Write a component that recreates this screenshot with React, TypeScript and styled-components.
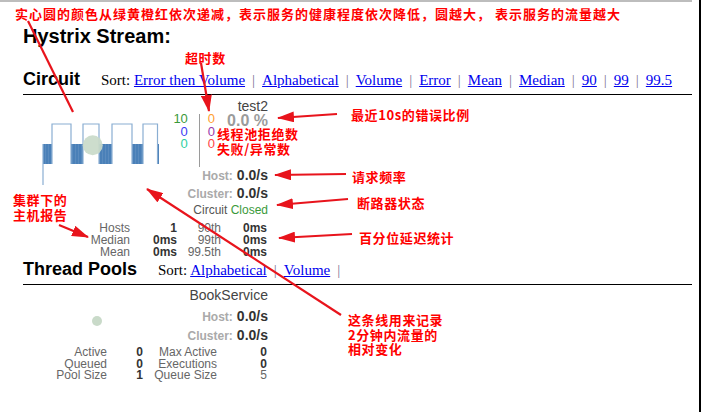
import React from "react";
import styled, { createGlobalStyle } from "styled-components";

const GlobalStyle = createGlobalStyle`
  html, body { margin: 0; padding: 0; background: #fff; }
  body { font-family: "Liberation Sans", Arial, sans-serif; }
`;

const Page = styled.div`
  position: relative;
  width: 699px;
  height: 412px;
  border-right: 2px solid #000;
  overflow: hidden;
  display: flex;
  flex-direction: column;
  font-family: "Liberation Sans", Arial, sans-serif;
  color: #000;
`;

const TopRule = styled.div`
  flex: none;
  width: 692px;
  height: 2px;
  background: #bdbdbd;
`;

const Content = styled.main`
  padding-left: 23px;
  width: 669px;
`;

const Title = styled.h1`
  margin: 22px 0 0;
  font-size: 20px;
  line-height: 24px;
  font-weight: bold;
`;

const SectionHeader = styled.div<{ $top: number }>`
  display: flex;
  align-items: baseline;
  margin-top: ${(p) => p.$top}px;
  padding-bottom: 3px;
  border-bottom: 1px solid #000;
`;

const SectionTitle = styled.h2`
  margin: 0;
  font-size: 18px;
  line-height: 22px;
  font-weight: bold;
`;

const SortBar = styled.div`
  margin-left: 21px;
  font-family: "Liberation Serif", "Times New Roman", serif;
  font-size: 15px;
  line-height: 22px;
  white-space: nowrap;
`;

const SortLink = styled.a`
  color: #0000ee;
  text-decoration: underline;
  cursor: pointer;
`;

const Sep = styled.span`
  color: #7d7196;
  padding: 0 7px;
`;

const Card = styled.section<{ $pad: number }>`
  width: 245px;
  padding-top: ${(p) => p.$pad}px;
  display: flex;
  flex-direction: column;
`;

const CardTop = styled.div`
  display: flex;
`;

const ChartArea = styled.div`
  flex: none;
  width: 142px;
`;

const ChartSvg = styled.svg<{ $mt: number; $ml: number }>`
  display: block;
  margin-top: ${(p) => p.$mt}px;
  margin-left: ${(p) => p.$ml}px;
  overflow: visible;
`;

const RightCol = styled.div`
  flex: 1;
  display: flex;
  flex-direction: column;
  align-items: flex-end;
`;

const Name = styled.div`
  font-size: 14px;
  line-height: 14px;
  color: #444;
`;

const CountsRow = styled.div`
  display: flex;
  align-items: flex-start;
`;

const CountCol = styled.div<{ $align: string }>`
  display: flex;
  flex-direction: column;
  font-size: 13px;
  line-height: 12.5px;
  text-align: ${(p) => p.$align};
`;

const Count = styled.span<{ $color: string }>`
  color: ${(p) => p.$color};
`;

const Divider = styled.div`
  width: 1px;
  height: 53px;
  margin: 1px 8px 0 11px;
  background: #9a9a9a;
`;

const Percent = styled.div`
  margin-left: 12px;
  font-size: 16px;
  line-height: 16px;
  font-weight: bold;
  color: #9b9b9b;
`;

const RateBlock = styled.div<{ $mt: number; $lh: number }>`
  margin-top: ${(p) => p.$mt}px;
  align-self: stretch;
  text-align: right;
  font-size: 14px;
  font-weight: bold;
  line-height: ${(p) => p.$lh}px;
  color: #333;
`;

const RateRow = styled.div`
  white-space: nowrap;
`;

const RateLabel = styled.span`
  margin-right: 4px;
  font-size: 12px;
  color: #aaa;
`;

const Status = styled.div`
  align-self: flex-end;
  font-size: 12px;
  line-height: 14px;
  color: #555;
`;

const Closed = styled.span`
  color: #3a9a3a;
`;

const StatTable = styled.div<{ $cols: string; $mt: number; $lh: number }>`
  display: grid;
  grid-template-columns: ${(p) => p.$cols};
  margin-top: ${(p) => p.$mt}px;
  font-size: 12px;
  line-height: ${(p) => p.$lh}px;
  text-align: right;
`;

const Cell = styled.span<{ $value?: boolean }>`
  color: ${(p) => (p.$value ? "#333" : "#666")};
  font-weight: ${(p) => (p.$value ? "bold" : "normal")};
  white-space: nowrap;
`;

const Overlay = styled.svg`
  position: absolute;
  left: 0;
  top: 0;
  pointer-events: none;
`;

const Note = styled.div<{ $x: number; $y: number; $lh?: number; $ls?: number }>`
  position: absolute;
  left: ${(p) => p.$x}px;
  top: ${(p) => p.$y}px;
  font-family: "Noto Sans CJK SC", "Liberation Sans", sans-serif;
  font-weight: bold;
  font-size: 13px;
  line-height: ${(p) => p.$lh ?? 13}px;
  letter-spacing: ${(p) => p.$ls ?? 0.6}px;
  color: #ff0000;
  white-space: pre;
  pointer-events: none;
`;

const blocks: [number, number][] = [
  [1, 9],
  [29, 12],
  [57, 13],
  [90, 11],
  [115, 2],
];

const CircuitChart = () => (
  <ChartSvg $mt={25} $ml={19} width="117" height="61" viewBox="0 0 117 61">
    <defs>
      <pattern id="stripes" width="3" height="20" patternUnits="userSpaceOnUse">
        <rect width="3" height="20" fill="#4a80b8" />
        <rect width="0.6" height="20" fill="#6592c2" />
      </pattern>
    </defs>
    {blocks.map(([x, w]) => (
      <rect key={x} x={x} y={20} width={w} height={20} fill="url(#stripes)" />
    ))}
    <path
      d="M1,61 V20 M10,40 V0 H29 V40 M41,40 V0 H57 V40 M70,40 V0 H90 V40 M101,40 V0 H115.5 V40"
      stroke="#8aaed2"
      strokeWidth="1.2"
      fill="none"
    />
    <circle cx="50.7" cy="21.3" r="10" fill="#c9dac9" fillOpacity="0.92" />
  </ChartSvg>
);

const PoolChart = () => (
  <ChartSvg $mt={0} $ml={0} width="142" height="50" viewBox="0 0 142 50">
    <circle cx="74" cy="33" r="5" fill="#c9dac9" />
  </ChartSvg>
);

const circuitSorts = ["Error then Volume", "Alphabetical", "Volume", "Error", "Mean", "Median", "90", "99", "99.5"];
const poolSorts = ["Alphabetical", "Volume"];

const arrows = [
  { x1: 201, y1: 63, x2: 209, y2: 111 },
  { x1: 337, y1: 114, x2: 278, y2: 118 },
  { x1: 346, y1: 174, x2: 275, y2: 175 },
  { x1: 348, y1: 199, x2: 277, y2: 205 },
  { x1: 352, y1: 234, x2: 279, y2: 238 },
  { x1: 59, y1: 225, x2: 88, y2: 237 },
  { x1: 341, y1: 315, x2: 147, y2: 189 },
];

export default function App() {
  return (
    <>
      <GlobalStyle />
      <Page>
        <TopRule />
        <Content>
          <Title>Hystrix Stream:</Title>

          <SectionHeader $top={20}>
            <SectionTitle>Circuit</SectionTitle>
            <SortBar>
              Sort:{" "}
              {circuitSorts.map((s, i) => (
                <React.Fragment key={s}>
                  {i > 0 && <Sep>|</Sep>}
                  <SortLink>{s}</SortLink>
                </React.Fragment>
              ))}
            </SortBar>
          </SectionHeader>

          <Card $pad={4}>
            <CardTop>
              <ChartArea>
                <CircuitChart />
              </ChartArea>
              <RightCol>
                <Name>test2</Name>
                <CountsRow>
                  <CountCol $align="right">
                    <Count $color="#3a9a3a">10</Count>
                    <Count $color="#3b3bf5">0</Count>
                    <Count $color="#2fcf9f">0</Count>
                  </CountCol>
                  <Divider />
                  <CountCol $align="left">
                    <Count $color="#ffa030">0</Count>
                    <Count $color="#9a3aaa">0</Count>
                    <Count $color="#ff4545">0</Count>
                  </CountCol>
                  <Percent>0.0 %</Percent>
                </CountsRow>
                <RateBlock $mt={0} $lh={17}>
                  <RateRow>
                    <RateLabel>Host:</RateLabel>0.0/s
                  </RateRow>
                  <RateRow>
                    <RateLabel>Cluster:</RateLabel>0.0/s
                  </RateRow>
                </RateBlock>
              </RightCol>
            </CardTop>
            <Status>
              Circuit <Closed>Closed</Closed>
            </Status>
            <StatTable $cols="107px 47px 44px 46px" $mt={5} $lh={12}>
              <Cell>Hosts</Cell>
              <Cell $value>1</Cell>
              <Cell>90th</Cell>
              <Cell $value>0ms</Cell>
              <Cell>Median</Cell>
              <Cell $value>0ms</Cell>
              <Cell>99th</Cell>
              <Cell $value>0ms</Cell>
              <Cell>Mean</Cell>
              <Cell $value>0ms</Cell>
              <Cell>99.5th</Cell>
              <Cell $value>0ms</Cell>
            </StatTable>
          </Card>

          <SectionHeader $top={0}>
            <SectionTitle>Thread Pools</SectionTitle>
            <SortBar>
              Sort:{" "}
              {poolSorts.map((s, i) => (
                <React.Fragment key={s}>
                  {i > 0 && <Sep>|</Sep>}
                  <SortLink>{s}</SortLink>
                </React.Fragment>
              ))}
              <Sep>|</Sep>
            </SortBar>
          </SectionHeader>

          <Card $pad={3}>
            <CardTop>
              <ChartArea>
                <PoolChart />
              </ChartArea>
              <RightCol>
                <Name>BookService</Name>
                <RateBlock $mt={5} $lh={18}>
                  <RateRow>
                    <RateLabel>Host:</RateLabel>0.0/s
                  </RateRow>
                  <RateRow>
                    <RateLabel>Cluster:</RateLabel>0.0/s
                  </RateRow>
                </RateBlock>
              </RightCol>
            </CardTop>
            <StatTable $cols="84px 36px 74px 50px" $mt={2} $lh={11.5}>
              <Cell>Active</Cell>
              <Cell $value>0</Cell>
              <Cell>Max Active</Cell>
              <Cell $value>0</Cell>
              <Cell>Queued</Cell>
              <Cell $value>0</Cell>
              <Cell>Executions</Cell>
              <Cell $value>0</Cell>
              <Cell>Pool Size</Cell>
              <Cell $value>1</Cell>
              <Cell>Queue Size</Cell>
              <Cell>5</Cell>
            </StatTable>
          </Card>
        </Content>

        <Overlay width="702" height="412" viewBox="0 0 702 412">
          <defs>
            <marker
              id="head"
              markerUnits="userSpaceOnUse"
              markerWidth="17"
              markerHeight="11"
              refX="16"
              refY="5.5"
              orient="auto"
              viewBox="0 0 17 11"
            >
              <path d="M0,0 L17,5.5 L0,11 z" fill="#e8141c" />
            </marker>
          </defs>
          <line x1="28" y1="21" x2="73" y2="112" stroke="#e8141c" strokeWidth="2.2" />
          {arrows.map((a, i) => (
            <line
              key={i}
              x1={a.x1}
              y1={a.y1}
              x2={a.x2}
              y2={a.y2}
              stroke="#e8141c"
              strokeWidth="2.2"
              markerEnd="url(#head)"
            />
          ))}
        </Overlay>

        <Note $x={15} $y={7} $ls={1}>
          {"实心圆的颜色从绿黄橙红依次递减，表示服务的健康程度依次降低，圆越大， 表示服务的流量越大"}
        </Note>
        <Note $x={185} $y={51}>超时数</Note>
        <Note $x={217} $y={127}>线程池拒绝数</Note>
        <Note $x={217} $y={142}>失败/异常数</Note>
        <Note $x={351} $y={108}>最近10s的错误比例</Note>
        <Note $x={352} $y={170}>请求频率</Note>
        <Note $x={357} $y={196}>断路器状态</Note>
        <Note $x={359} $y={231}>百分位延迟统计</Note>
        <Note $x={13} $y={192} $lh={15}>
          {"集群下的\n主机报告"}
        </Note>
        <Note $x={348} $y={313} $lh={14.5}>
          {"这条线用来记录\n2分钟内流量的\n相对变化"}
        </Note>
      </Page>
    </>
  );
}
